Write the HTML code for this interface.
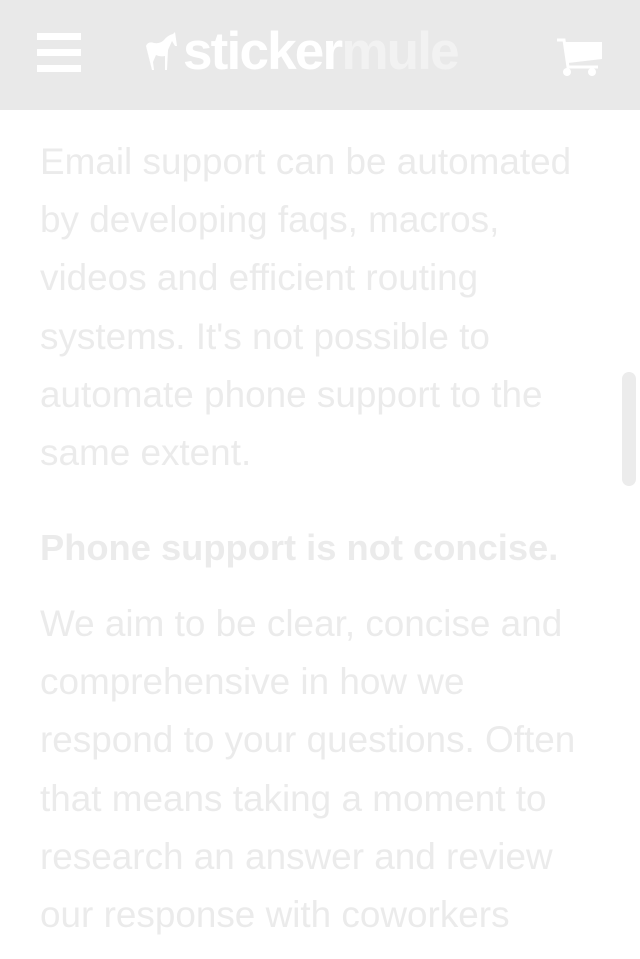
<!DOCTYPE html><html><head><style>
body{margin:0;width:640px;height:959px;overflow:hidden;background:#fff;font-family:"Liberation Sans",sans-serif;position:relative}
.hdr{position:absolute;left:0;top:0;width:640px;height:110px;background:#e9e9e9}
.t{position:absolute;left:40px;color:#ebebeb;font-size:36.9px;line-height:58.2px;margin:0;white-space:nowrap}
.b{font-weight:bold;font-size:36.3px}
</style></head><body>
<div class="hdr">
<div style="position:absolute;left:37px;top:33px;width:44px;height:7px;background:#fff"></div>
<div style="position:absolute;left:37px;top:49px;width:44px;height:7px;background:#fff"></div>
<div style="position:absolute;left:37px;top:65px;width:44px;height:7px;background:#fff"></div>
<svg style="position:absolute;left:146px;top:32px" width="40" height="42" viewBox="0 0 40 42"><path d="M0 14 Q2 9 8 11 Q14 12 18 8 Q22 3 27 2 L29 0 L31 14 L29 14 L26 9 L22 18 L21 38 L19 38 L19 24 Q14 25 10 23 L7 30 L8 38 L6 38 L4 30 Z" fill="#fff"/></svg>
<div style="position:absolute;left:183px;top:20px;font-size:53px;font-weight:bold;letter-spacing:-1.8px;color:#fff;line-height:64px">sticker<span style="color:#f2f2f2">mule</span></div>
<svg style="position:absolute;left:555px;top:38px" width="48" height="40" viewBox="0 0 48 40"><path d="M2 2h7l4 27h30" stroke="#fff" stroke-width="3" fill="none"/><path d="M10 4h37v17l-34 4z" fill="#fff"/><circle cx="12" cy="34" r="4" fill="#fff"/><circle cx="37" cy="34" r="4" fill="#fff"/></svg>
</div>
<div class="t" style="top:133px">Email support can be automated<br>by developing faqs, macros,<br>videos and efficient routing<br>systems. It's not possible to<br>automate phone support to the<br>same extent.</div>
<div class="t b" style="top:519px">Phone support is not concise.</div>
<div class="t" style="top:595px">We aim to be clear, concise and<br>comprehensive in how we<br>respond to your questions. Often<br>that means taking a moment to<br>research an answer and review<br>our response with coworkers</div>
<div style="position:absolute;left:622px;top:372px;width:14px;height:114px;border-radius:7px;background:#ececec"></div>
</body></html>
